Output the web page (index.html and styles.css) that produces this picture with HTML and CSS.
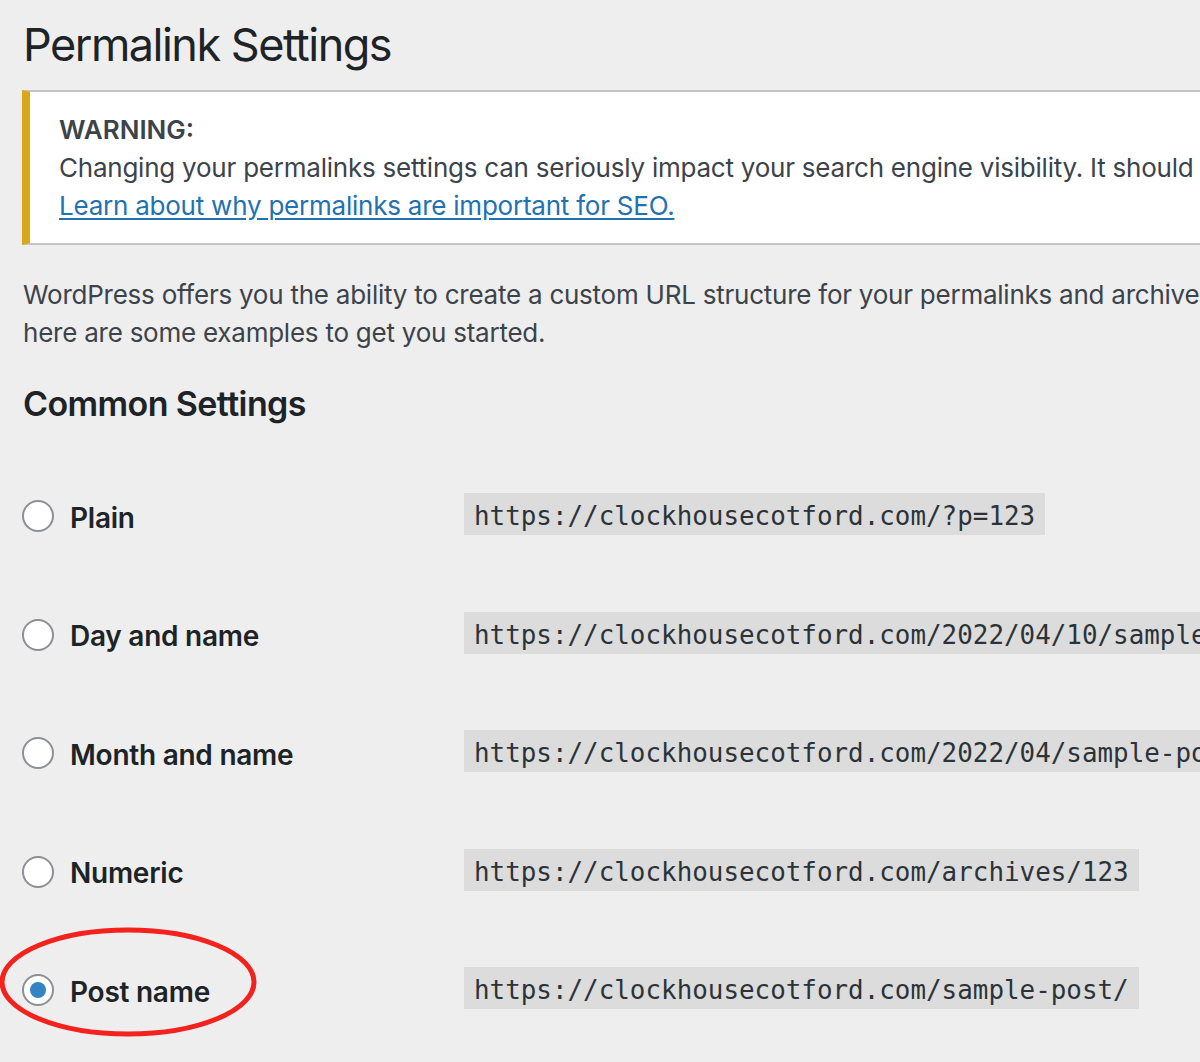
FILE: index.html
```html
<!DOCTYPE html>
<html lang="en">
<head>
<meta charset="utf-8">
<title>Permalink Settings</title>
<link rel="stylesheet" href="styles.css">
</head>
<body>
<div class="wrap">
  <h1 class="title">Permalink Settings</h1>
  <div class="notice">
    <p class="line"><strong>WARNING:</strong></p>
    <p class="line">Changing your permalinks settings can seriously impact your search engine visibility. It should almost never be done on a live website.</p>
    <p class="line"><a href="#" class="link">Learn about why permalinks are important for SEO.</a></p>
  </div>
  <p class="intro">WordPress offers you the ability to create a custom URL structure for your permalinks and archives. Custom URL structures can improve the aesthetics, usability, and forward-compatibility of your links. A number of tags are available, and<br>here are some examples to get you started.</p>
  <h2 class="section">Common Settings</h2>
  <div class="rows">
    <div class="row">
      <label class="opt"><span class="radio"></span><span class="label">Plain</span></label>
      <code class="url">https://clockhousecotford.com/?p=123</code>
    </div>
    <div class="row">
      <label class="opt"><span class="radio"></span><span class="label">Day and name</span></label>
      <code class="url">https://clockhousecotford.com/2022/04/10/sample-post/</code>
    </div>
    <div class="row">
      <label class="opt"><span class="radio"></span><span class="label">Month and name</span></label>
      <code class="url">https://clockhousecotford.com/2022/04/sample-post/</code>
    </div>
    <div class="row">
      <label class="opt"><span class="radio"></span><span class="label">Numeric</span></label>
      <code class="url">https://clockhousecotford.com/archives/123</code>
    </div>
    <div class="row">
      <label class="opt"><span class="radio checked"></span><span class="label">Post name</span></label>
      <code class="url">https://clockhousecotford.com/sample-post/</code>
    </div>
  </div>
</div>
<svg class="circle-mark" width="262" height="118" viewBox="0 0 262 118" aria-hidden="true">
  <ellipse cx="129" cy="57" rx="126" ry="52" fill="none" stroke="#f3221c" stroke-width="5"/>
</svg>
</body>
</html>
```
FILE: styles.css
```css
html, body {
  margin: 0;
  padding: 0;
}
body {
  background: #eeeeee;
  font-family: Inter, "Noto Sans", sans-serif;
  color: #3c434a;
  overflow: hidden;
  width: 1200px;
  height: 1062px;
  position: relative;
}
.wrap {
  width: 1700px;
  padding-left: 22px;
}
.title {
  margin: 0;
  padding-top: 15px;
  font-size: 45px;
  letter-spacing: -1.5px;
  line-height: 60px;
  font-weight: 400;
  color: #1d2327;
  padding-left: 1px;
}
.notice {
  margin-top: 15px;
  background: #fff;
  border-top: 2px solid #c3c4c7;
  border-bottom: 2px solid #c3c4c7;
  border-left: 8px solid #dba617;
  padding: 18.5px 0 18.5px 29px;
}
.line {
  margin: 0;
  font-size: 26px;
  line-height: 38px;
  letter-spacing: -0.23px;
  white-space: nowrap;
  color: #3c434a;
}
.line strong {
  font-weight: 600;
  letter-spacing: 0;
  color: #3c434a;
}
.link {
  color: #2271b1;
  text-decoration: underline;
  text-underline-offset: 3px;
}
.intro {
  margin: 30.5px 0 0 1px;
  font-size: 26px;
  line-height: 38px;
  letter-spacing: -0.24px;
  white-space: nowrap;
}
.section {
  margin: 30px 0 0 1px;
  font-size: 34px;
  letter-spacing: -0.6px;
  line-height: 44px;
  font-weight: 600;
  color: #1d2327;
}
.rows {
  margin-top: 31.4px;
}
.row {
  height: 118.5px;
  display: grid;
  grid-template-columns: 442px auto;
  align-items: center;
  justify-items: start;
}
.opt {
  display: flex;
  align-items: center;
  gap: 16px;
}
.radio {
  width: 32px;
  height: 32px;
  box-sizing: border-box;
  border: 2px solid #8c8f94;
  border-radius: 50%;
  background: #fff;
  display: flex;
  align-items: center;
  justify-content: center;
}
.radio.checked::after {
  content: "";
  width: 16px;
  height: 16px;
  border-radius: 50%;
  background: #3582c4;
}
.label {
  font-size: 28px;
  letter-spacing: -0.25px;
  font-weight: 600;
  color: #1d2327;
  line-height: 32px;
  padding-top: 3px;
}
.url {
  font-family: "DejaVu Sans Mono", "Liberation Mono", monospace;
  font-size: 25.9px;
  line-height: 38px;
  padding: 4px 10px 0;
  height: 42px;
  box-sizing: border-box;
  background: #dcdcdc;
  color: #2c3338;
  white-space: nowrap;
  margin-bottom: 4px;
}
.circle-mark {
  position: absolute;
  left: -1px;
  top: 925px;
}
```
